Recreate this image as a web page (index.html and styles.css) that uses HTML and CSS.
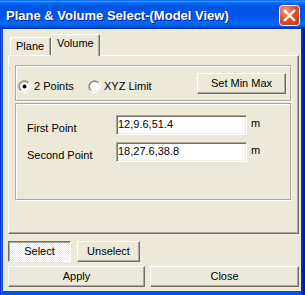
FILE: index.html
```html
<!DOCTYPE html>
<html>
<head>
<meta charset="utf-8">
<link rel="stylesheet" href="styles.css">
</head>
<body>
<div class="window">
  <div class="titlebar">
    <span class="title">Plane &amp; Volume Select-(Model View)</span>
    <div class="close">
      <svg width="21" height="21" viewBox="0 0 21 21">
        <defs>
          <radialGradient id="cg" cx="0.3" cy="0.25" r="0.9">
            <stop offset="0" stop-color="#F0A285"/>
            <stop offset="0.45" stop-color="#DD5A35"/>
            <stop offset="1" stop-color="#C23A17"/>
          </radialGradient>
        </defs>
        <rect x="0.5" y="0.5" width="20" height="20" rx="3" fill="url(#cg)" stroke="#fff"/>
        <path d="M6 6 L15 15 M15 6 L6 15" stroke="#fff" stroke-width="2.4" stroke-linecap="square"/>
      </svg>
    </div>
  </div>
  <div class="frame">
    <div class="client">
      <div class="tabs">
        <div class="tab">Plane</div>
        <div class="tab active">Volume</div>
      </div>
      <div class="panel">
        <div class="group g1">
          <label class="radio r1">
            <svg width="13" height="13" viewBox="0 0 13 13">
              <defs>
                <linearGradient id="ro" x1="0" y1="0" x2="1" y2="1">
                  <stop offset="0.5" stop-color="#ACA899"/>
                  <stop offset="0.5" stop-color="#FFFFFF"/>
                </linearGradient>
                <linearGradient id="ri" x1="0" y1="0" x2="1" y2="1">
                  <stop offset="0.5" stop-color="#716F64"/>
                  <stop offset="0.5" stop-color="#F1EFE2"/>
                </linearGradient>
              </defs>
              <circle cx="6.5" cy="6.5" r="6" fill="none" stroke="url(#ro)"/>
              <circle cx="6.5" cy="6.5" r="5" fill="#fff" stroke="url(#ri)"/>
              <circle cx="6.5" cy="6.5" r="2" fill="#000"/>
            </svg>
            <span>2 Points</span>
          </label>
          <label class="radio">
            <svg width="13" height="13" viewBox="0 0 13 13">
              <circle cx="6.5" cy="6.5" r="6" fill="none" stroke="url(#ro)"/>
              <circle cx="6.5" cy="6.5" r="5" fill="#fff" stroke="url(#ri)"/>
            </svg>
            <span>XYZ Limit</span>
          </label>
          <div class="btn setmm">Set Min Max</div>
        </div>
        <div class="group g2">
          <div class="row">
            <span class="lbl">First Point</span>
            <span class="input">12,9.6,51.4</span>
            <span class="unit">m</span>
          </div>
          <div class="row">
            <span class="lbl">Second Point</span>
            <span class="input">18,27.6,38.8</span>
            <span class="unit">m</span>
          </div>
        </div>
      </div>
      <div class="brow brow1">
        <div class="btn pressed sel">Select</div>
        <div class="btn sel">Unselect</div>
      </div>
      <div class="brow brow2">
        <div class="btn apply">Apply</div>
        <div class="btn closebtn">Close</div>
      </div>
    </div>
  </div>
</div>
</body>
</html>
```

FILE: styles.css
```css
* { box-sizing: border-box; }
html, body { margin: 0; padding: 0; }
body {
  width: 305px;
  height: 295px;
  overflow: hidden;
  font-family: "Liberation Sans", Arial, sans-serif;
  font-size: 11px;
  color: #000;
  background: #0054E3;
}
.window {
  width: 305px;
  height: 295px;
  display: flex;
  flex-direction: column;
}
.titlebar {
  height: 29px;
  flex: none;
  display: flex;
  align-items: flex-start;
  background: linear-gradient(to bottom,
    #0058EE 0%, #3593FF 4%, #288EFF 6%, #127DFF 8%, #036FFC 10%,
    #0262EE 14%, #0057E5 20%, #0054E3 24%, #0055EB 56%, #005BF5 66%,
    #026AFE 76%, #0062EF 86%, #0052D6 92%, #0040AB 96%, #003092 100%);
}
.title {
  flex: 1;
  padding: 8px 0 0 6px;
  font-family: "Liberation Sans", Arial, sans-serif;
  font-weight: bold;
  font-size: 13px;
  line-height: 15px;
  color: #fff;
  text-shadow: 1px 1px 0 #0A1E8C;
  white-space: nowrap;
}
.close {
  width: 21px;
  height: 21px;
  margin: 5px 5px 0 0;
}
.close svg { display: block; }
.frame {
  flex: 1;
  padding: 0 4px 4px 3px;
  background:
    linear-gradient(to right, #0831D9 0, #0831D9 1px, #166AEE 1px, #166AEE 2px, #0855DD 2px, #0855DD 3px, transparent 3px, transparent 301px, #0036D0 301px, #0036D0 302px, #0029B8 302px, #0029B8 303px, #001EA0 303px) ,
    linear-gradient(to bottom, #0054E3 0, #0054E3 291px, #0040C8 291px, #0033B0 293px, #001EA0 295px);
  display: flex;
}
.client {
  flex: 1;
  background: #ECE9D8;
  display: flex;
  flex-direction: column;
}
.tabs {
  height: 26px;
  flex: none;
  display: flex;
  align-items: flex-end;
  padding-left: 7px;
}
.tab {
  height: 18px;
  padding: 2px 0 0 5px;
  line-height: 13px;
  border-top: 1px solid #fff;
  border-left: 1px solid #fff;
  border-right: 1px solid #716F64;
  border-radius: 2px 2px 0 0;
  box-shadow: inset -1px 0 0 #ACA899;
  background: #ECE9D8;
}
.tab:first-child { width: 41px; }
.tab.active {
  width: 49px;
  height: 22px;
  margin-bottom: -1px;
  position: relative;
  z-index: 1;
}
.panel {
  margin-left: 5px;
  width: 291px;
  height: 179px;
  flex: none;
  border-top: 1px solid #fff;
  border-left: 1px solid #fff;
  border-right: 1px solid #716F64;
  border-bottom: 1px solid #716F64;
  box-shadow: inset -1px -1px 0 #ACA899;
  padding: 9px 0 0 6px;
}
.group {
  width: 276px;
  border: 1px solid #ACA899;
  box-shadow: 1px 1px 0 #fff, inset 1px 1px 0 #fff;
}
.g1 {
  height: 36px;
  display: flex;
  align-items: flex-start;
}
.radio {
  display: flex;
  align-items: center;
  gap: 3px;
  margin-top: 14px;
  line-height: 13px;
  height: 13px;
  white-space: nowrap;
}
.radio svg { display: block; flex: none; }
.r1 { margin-left: 2px; width: 70px; }
.btn {
  height: 21px;
  display: flex;
  align-items: center;
  justify-content: center;
  line-height: 13px;
  border-top: 1px solid #fff;
  border-left: 1px solid #fff;
  border-right: 1px solid #716F64;
  border-bottom: 1px solid #716F64;
  box-shadow: inset -1px -1px 0 #ACA899;
  background: #ECE9D8;
  white-space: nowrap;
}
.setmm {
  width: 89px;
  margin: 7px 4px 0 auto;
}
.g2 {
  height: 97px;
  margin-top: 2px;
  padding: 11px 0 0 11px;
}
.row {
  display: flex;
  align-items: flex-start;
  height: 20px;
  margin-bottom: 7px;
}
.lbl {
  width: 89px;
  margin-top: 7px;
  line-height: 13px;
}
.input {
  width: 131px;
  height: 20px;
  padding: 2px 0 0 1px;
  line-height: 13px;
  background: #fff;
  border: 1px solid;
  border-color: #ACA899 #fff #fff #ACA899;
  box-shadow: inset 1px 1px 0 #716F64, inset -1px -1px 0 #F1EFE2;
}
.unit {
  margin: 2px 0 0 4px;
  line-height: 13px;
}
.brow {
  display: flex;
  padding-left: 5px;
  flex: none;
}
.brow1 { margin-top: 7px; gap: 6px; }
.brow2 { margin-top: 4px; gap: 5px; }
.sel { width: 63px; }
.pressed {
  border-top-color: #716F64;
  border-left-color: #716F64;
  border-right-color: #fff;
  border-bottom-color: #fff;
  box-shadow: inset 1px 1px 0 #ACA899;
  background: repeating-conic-gradient(#fff 0 25%, #ECE9D8 0 50%) 0 0 / 2px 2px;
}
.apply { width: 137px; }
.closebtn { width: 149px; }
```
